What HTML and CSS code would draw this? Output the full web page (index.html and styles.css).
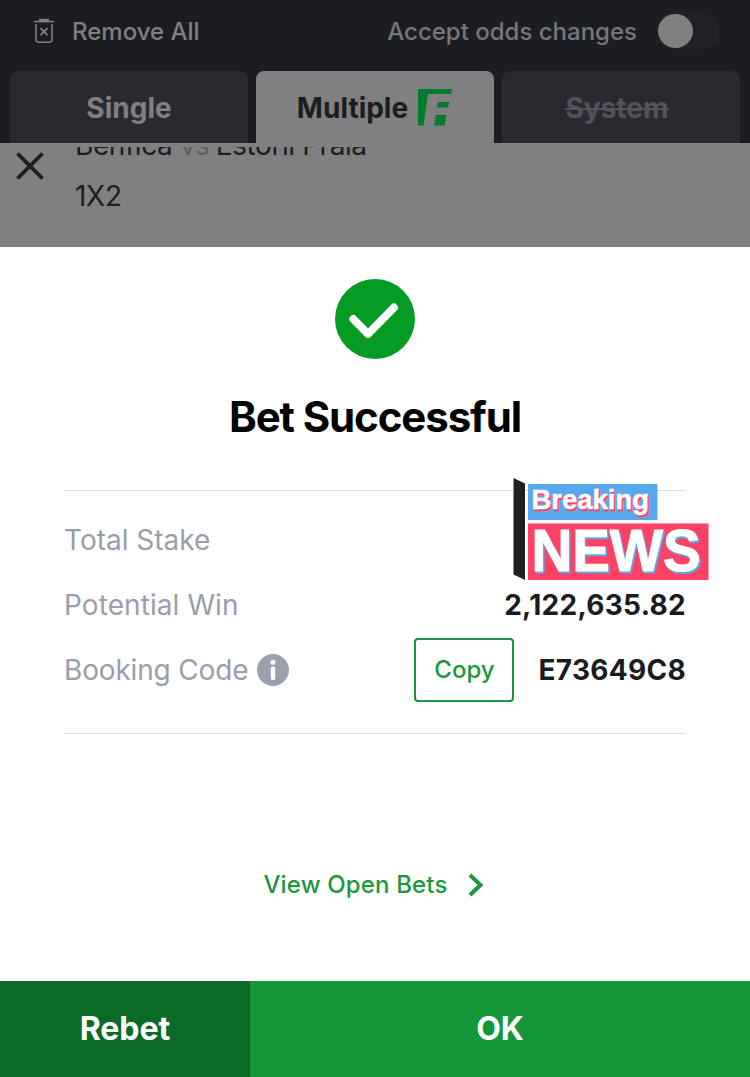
FILE: index.html
```
<!DOCTYPE html>
<html lang="en">

<head>
    <meta charset="UTF-8">
    <title>Bet Successful</title>
    <link rel="stylesheet" href="styles.css">
</head>

<body>
    <header class="topbar">
        <div class="remove">
            <svg width="20" height="26" viewBox="0 0 20 26" fill="none" stroke="#808080">
                <path d="M0 3.600h20" stroke-width="1.600" />
                <path d="M5 2h10" stroke-width="2.400" />
                <path d="M2 6v15.500q0 2.700 2.700 2.700h10.600q2.700 0 2.700-2.700V6" stroke-width="1.600" />
                <path d="M6.600 10.200l7 7M13.600 10.200l-7 7" stroke-width="1.800" />
            </svg>
            <span>Remove All</span>
        </div>
        <div class="accept">
            <span>Accept odds changes</span>
            <div class="toggle"></div>
        </div>
    </header>

    <nav class="tabs">
        <div class="tab">Single</div>
        <div class="tab active">
            <span>Multiple</span>
            <svg width="35" height="37" viewBox="0 0 35 37" fill="#007a2c">
                <path d="M0 0H34.500L33 5H10L5.500 36.500H0Z" />
                <path d="M20 13H31.500L30 18.500H18.500Z" />
                <path d="M18 26H28.500L26.500 36.500H16Z" />
            </svg>
        </div>
        <div class="tab disabled"><s>System</s></div>
    </nav>

    <section class="slip">
        <svg class="close" width="28" height="28" viewBox="0 0 28 28" stroke="#1c1d22" stroke-width="3.800">
            <path d="M1.500 1.500l25 25M26.500 1.500l-25 25" />
        </svg>
        <div class="event">
            <div class="teams">Benfica <span class="vs">vs</span> Estoril Praia</div>
            <div class="market">1X2</div>
        </div>
    </section>

    <main class="result">
        <svg class="check" width="80" height="80" viewBox="0 0 80 80" fill="none">
            <circle cx="40" cy="40" r="40" fill="#049b25" />
            <path d="M18.300 40L33 55L59 28.500" stroke="#fff" stroke-width="8" stroke-linecap="round" stroke-linejoin="round" />
        </svg>
        <h1>Bet Successful</h1>

        <div class="details">
            <div class="row">
                <span class="label stake">Total Stake</span>
            </div>
            <div class="row">
                <span class="label win">Potential Win</span>
                <span class="value amount">2,122,635.82</span>
            </div>
            <div class="row last">
                <span class="label code">Booking Code</span>
                <svg class="info" width="32" height="32" viewBox="0 0 32 32">
                    <circle cx="16" cy="16" r="16" fill="#9ca0ad" />
                    <circle cx="16" cy="8.300" r="2.500" fill="#fff" />
                    <rect x="13.800" y="12.500" width="4.400" height="13.500" rx="1.800" fill="#fff" />
                </svg>
                <button class="copy">Copy</button>
                <span class="value booking">E73649C8</span>
            </div>

            <!-- sticker over the stake amount -->
            <svg class="sticker" width="196" height="103" viewBox="0 0 196 103">
                <path d="M0.500 0L12 5.500V102L0.500 96.500Z" fill="#231f20" />
                <rect x="15" y="6" width="129.500" height="36" fill="#58a8eb" />
                <rect x="15" y="45.500" width="180.500" height="56.500" fill="#ff4165" />
                <g class="sticker-small">
                    <text x="20" y="32.500" textLength="117.500" lengthAdjust="spacingAndGlyphs" fill="#ff4165" stroke="#ff4165">Breaking</text>
                    <text x="18.500" y="31" textLength="117.500" lengthAdjust="spacingAndGlyphs" fill="#fff" stroke="#fff">Breaking</text>
                </g>
                <g class="sticker-big">
                    <text x="20" y="94.500" textLength="169" lengthAdjust="spacingAndGlyphs" fill="#58a8eb" stroke="#58a8eb">NEWS</text>
                    <text x="18.500" y="93" textLength="169" lengthAdjust="spacingAndGlyphs" fill="#fff" stroke="#fff">NEWS</text>
                </g>
            </svg>
        </div>

        <a class="open-bets">
            <span>View Open Bets</span>
            <svg width="16" height="24" viewBox="0 0 16 24" fill="none" stroke="#1c9740" stroke-width="4">
                <path d="M2 2L12.500 12L2 22" />
            </svg>
        </a>
    </main>

    <footer class="actions">
        <button class="rebet">Rebet</button>
        <button class="ok">OK</button>
    </footer>
</body>

</html>
```
FILE: styles.css
```
body {
    display: flex;
    flex-direction: column;
    height: 1077px;
    margin: 0;
    overflow: hidden;
    background-color: #fff;
    color: #1b1c22;
    font-family: Inter, 'Liberation Sans', sans-serif;
    font-size: 28px;
}

svg {
    display: block;
    flex-shrink: 0;
}

button {
    border: none;
    padding: 0;
    font-family: inherit;
    cursor: pointer;
}

.topbar {
    display: flex;
    justify-content: space-between;
    box-sizing: border-box;
    height: 71px;
    padding: 12px 30px 0 34px;
    background-color: #1c1d22;
    color: #808080;
    font-size: 24px;
    font-weight: 500;
    line-height: 40px;
}

.remove {
    display: flex;
    gap: 18px;
}

.remove svg {
    margin-top: 6px;
}

.accept {
    display: flex;
    gap: 19px;
    color: #76777b;
}

.toggle {
    width: 64px;
    height: 38px;
    border-radius: 19px;
    background-color: #202126;
}

.toggle::before {
    content: "";
    display: block;
    width: 35px;
    height: 34px;
    margin: 2px;
    border-radius: 50%;
    background-color: #808080;
}

.tabs {
    display: flex;
    gap: 8px;
    height: 72px;
    padding: 0 10px;
    background-color: #1c1d22;
    font-weight: 700;
    line-height: 74px;
}

.tab {
    display: flex;
    flex: 1 1 0;
    justify-content: center;
    box-sizing: border-box;
    height: 72px;
    border-radius: 8px 8px 0 0;
    background-color: #292a30;
    color: #808080;
}

.tab.active {
    gap: 10px;
    background-color: #808080;
    color: #1c1d22;
}

.tab.active svg {
    margin-top: 18px;
}

.tab.disabled {
    color: #53545a;
}

.tab.disabled s {
    margin-right: 8px;
}

.slip {
    display: flex;
    height: 104px;
    background-color: #808080;
    color: #1c1d22;
}

.close {
    margin: 9px 0 0 16px;
}

.event {
    height: 100px;
    margin: 4px 0 0 31px;
    overflow: hidden;
    line-height: 34px;
}

.teams {
    margin-top: -19px;
    letter-spacing: -0.430px;
}

.vs {
    margin-right: -1px;
    color: #5c5d62;
}

.market {
    margin-top: 17px;
    letter-spacing: -0.3px;
}

.result {
    display: flex;
    flex: 1;
    flex-direction: column;
    align-items: center;
}

.check {
    margin-top: 32px;
}

h1 {
    margin: 32px 0 48px;
    color: #000;
    font-size: 42px;
    font-weight: 700;
    letter-spacing: -1.100px;
    line-height: 51px;
}

.details {
    position: relative;
    box-sizing: border-box;
    width: 622px;
    height: 244px;
    padding-top: 16px;
    border-top: 1px solid #ddd;
    border-bottom: 1px solid #ddd;
}

.row {
    display: flex;
    align-items: center;
    height: 65.500px;
}

.row.last {
    margin-top: -1px;
}

.label {
    color: #9a9dab;
}

.win {
    letter-spacing: 0.080px;
}

.code {
    letter-spacing: -0.170px;
}

.value {
    font-weight: 700;
    letter-spacing: 0.300px;
}

.amount {
    margin-left: auto;
}

.info {
    margin-left: 9px;
}

.copy {
    box-sizing: border-box;
    width: 100px;
    height: 64px;
    margin: 0 24px 0 auto;
    border: 2px solid #1c9740;
    border-radius: 4px;
    background-color: #fff;
    color: #1c9740;
    font-size: 24px;
    font-weight: 500;
}

.sticker {
    position: absolute;
    top: -13px;
    left: 449px;
    font-family: 'Liberation Sans', sans-serif;
    font-weight: 700;
}

.sticker-small {
    font-size: 27px;
    stroke-width: 0.500px;
}

.sticker-big {
    font-size: 59px;
    stroke-width: 1.200px;
}

.open-bets {
    display: flex;
    align-items: center;
    gap: 20px;
    margin: 136px 3px 0 0;
    color: #1c9740;
    font-size: 24px;
    font-weight: 500;
    letter-spacing: 0.150px;
    line-height: 30px;
}

.actions {
    display: flex;
    height: 96px;
}

.actions button {
    padding-bottom: 2px;
    color: #fff;
    font-size: 32px;
    font-weight: 700;
}

.rebet {
    width: 250px;
    background-color: #0b6b26;
}

.ok {
    flex: 1;
    background-color: #159739;
}
```
